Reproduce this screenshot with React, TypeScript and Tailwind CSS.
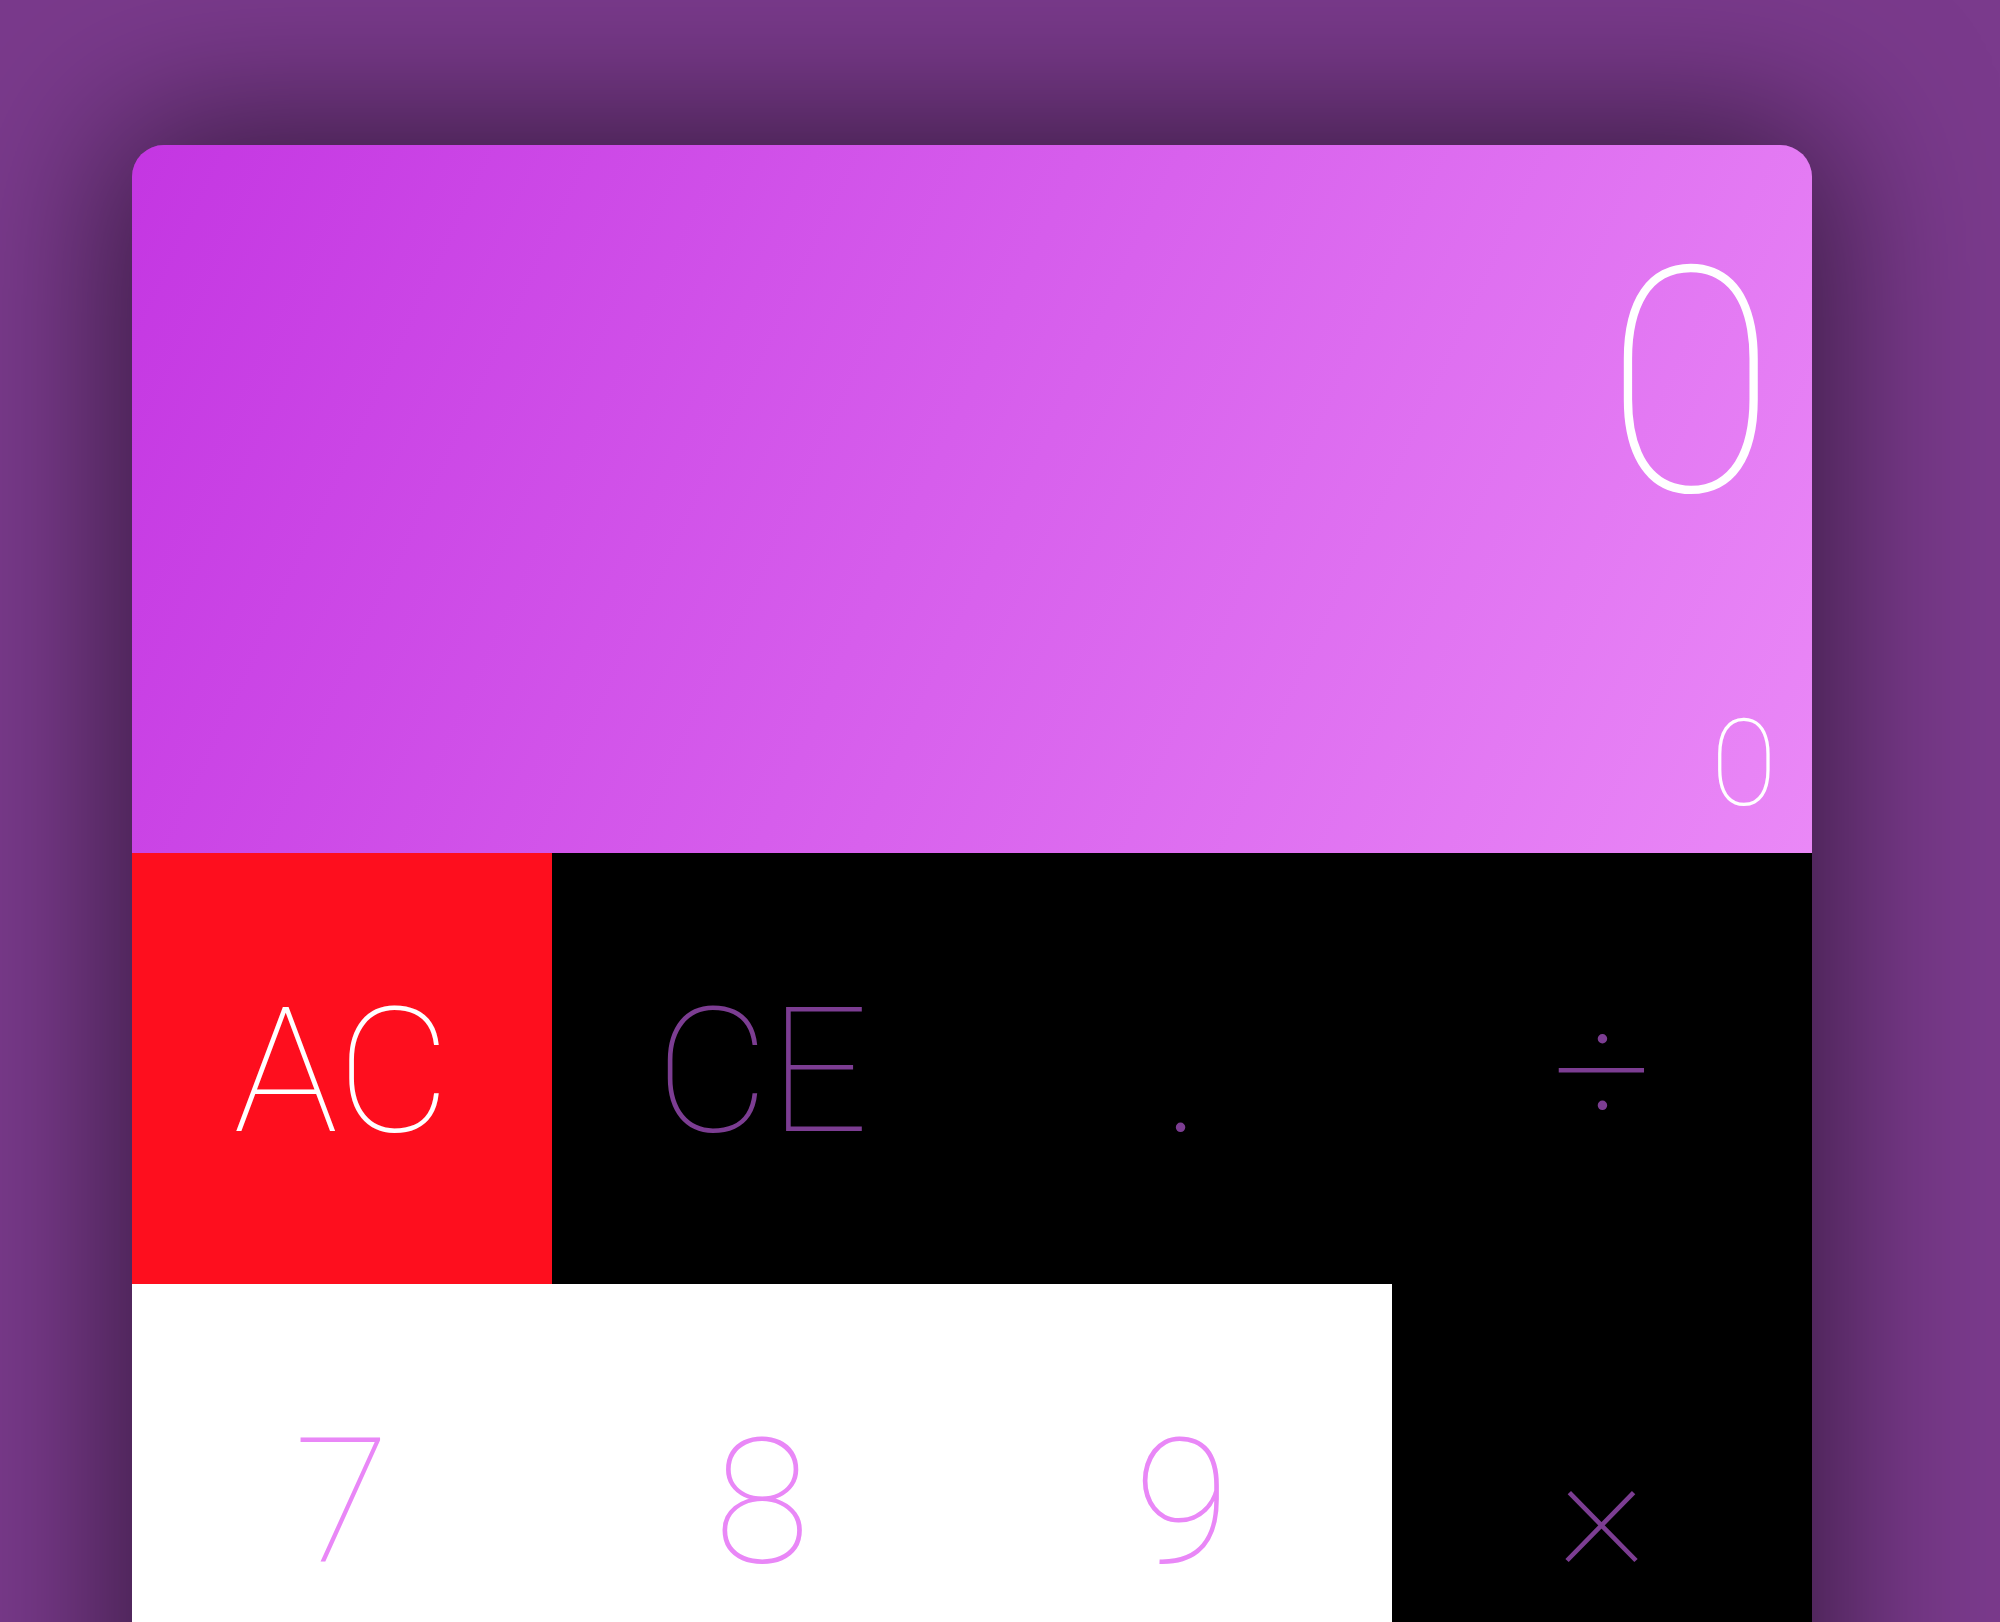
const keys = [
  { label: "AC", cls: "bg-[#fe0e1e] text-white" },
  { label: "CE", cls: "bg-black text-[#7c3d92]" },
  { label: ".", cls: "bg-black text-[#7c3d92]" },
  { label: "÷", cls: "bg-black text-[#7c3d92]" },
  { label: "7", cls: "bg-white text-[#e987f7]" },
  { label: "8", cls: "bg-white text-[#e987f7]" },
  { label: "9", cls: "bg-white text-[#e987f7]" },
  { label: "×", cls: "bg-black text-[#7c3d92]" },
  { label: "4", cls: "bg-white text-[#e987f7]" },
  { label: "5", cls: "bg-white text-[#e987f7]" },
  { label: "6", cls: "bg-white text-[#e987f7]" },
  { label: "−", cls: "bg-black text-[#7c3d92]" },
  { label: "1", cls: "bg-white text-[#e987f7]" },
  { label: "2", cls: "bg-white text-[#e987f7]" },
  { label: "3", cls: "bg-white text-[#e987f7]" },
  { label: "+", cls: "bg-black text-[#7c3d92]" },
]

export default function App() {
  return (
    <main className="min-h-screen overflow-hidden bg-[#7a3a8c] pl-[132px] pt-[145px] font-['Roboto','Liberation_Sans',sans-serif]">
      <div className="w-[1680px] overflow-hidden rounded-t-[32px] shadow-[0_0_160px_20px_rgba(0,0,0,0.55)]">
        {/* display */}
        <div className="flex h-[708px] flex-col items-end justify-between bg-[linear-gradient(115deg,#c436e2,#ea88f7)] pb-[28px] pr-[35px] pt-[81px] text-white">
          <div className="text-[315px] font-thin leading-none">0</div>
          <div className="text-[121px] font-thin leading-none">0</div>
        </div>

        {/* keypad */}
        <div className="grid grid-cols-4">
          {keys.map((k) => (
            <button
              key={k.label}
              className={`flex h-[431px] items-center justify-center pt-[5px] text-[175px] font-thin leading-none ${k.cls}`}
            >
              {k.label}
            </button>
          ))}
        </div>
      </div>
    </main>
  )
}
